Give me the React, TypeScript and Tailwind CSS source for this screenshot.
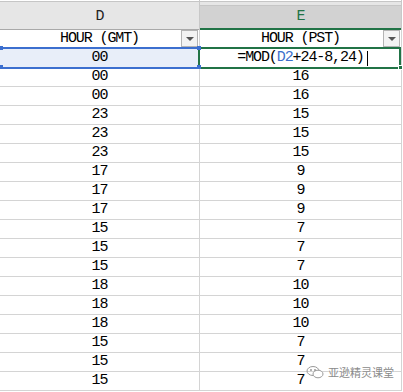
const gmt = ["00", "00", "00", "23", "23", "23", "17", "17", "17", "15", "15", "15", "18", "18", "18", "15", "15", "15"];
const pst = ["=", "16", "16", "15", "15", "15", "9", "9", "9", "7", "7", "7", "10", "10", "10", "7", "7", "7"];

const FilterButton = () => (
  <div className="absolute right-[1px] top-0 flex h-[17px] w-[17px] items-center justify-center border border-[#b4b4b4] bg-[#f3f3f3]">
    <div className="h-0 w-0 border-x-[4px] border-t-[4px] border-x-transparent border-t-[#555]" />
  </div>
);

export default function App() {
  return (
    <div className="relative h-[392px] w-[403px] overflow-hidden bg-white font-['Liberation_Mono',monospace] text-[15px] tracking-[-1.1px] text-black">
      {/* column letters */}
      <div className="flex h-[30px]">
        <div className="flex w-[200px] flex-col border-r border-[#c8c8c8] bg-[#e6e6e6]">
          <div className="h-[1px] bg-white" />
          <div className="h-[1px] bg-[#c6c6c6]" />
          <div className="flex flex-1 items-end justify-center border-b border-[#a9a9a9] pb-[1px] text-[#222]">D</div>
        </div>
        <div className="flex w-[202px] flex-col border-r border-[#c8c8c8] bg-[#e6e6e6]">
          <div className="h-[1px] bg-white" />
          <div className="h-[1px] bg-[#c6c6c6]" />
          <div className="h-[8px] border-b border-[#c6c6c6]" />
          <div className="flex flex-1 items-center justify-center border-b-2 border-[#217346] bg-[#d2d2d2] text-[#217346]">E</div>
        </div>
      </div>

      {/* header row */}
      <div className="flex h-[19px]">
        <div className="relative flex w-[200px] items-center justify-center border-b border-r border-[#d4d4d4]">
          HOUR (GMT)
          <FilterButton />
        </div>
        <div className="relative flex w-[202px] items-center justify-center border-b border-r border-[#d4d4d4]">
          HOUR (PST)
          <FilterButton />
        </div>
      </div>

      {gmt.map((g, i) => (
        <div key={i} className="flex h-[19px]">
          <div
            className={`flex w-[200px] items-center justify-center border-b border-r border-[#d4d4d4] ${
              i === 0 ? "bg-[#e8eef9]" : ""
            }`}
          >
            {g}
          </div>
          <div className="flex w-[202px] items-center justify-center border-b border-r border-[#d4d4d4]">
            {i === 0 ? (
              <span className="flex items-center pl-[4px]">
                =MOD(<span className="text-[#3b6fcc]">D2</span>+24-8,24)
                <span className="ml-[3px] inline-block h-[15px] w-px bg-black" />
              </span>
            ) : (
              pst[i]
            )}
          </div>
        </div>
      ))}

      {/* range highlight on D2 */}
      <div className="absolute left-[-2px] top-[47px] h-[22px] w-[202px] border-2 border-[#3c6fcf]" />
      <div className="absolute left-0 top-[46px] h-[4px] w-[3px] bg-[#3c6fcf]" />
      <div className="absolute left-0 top-[65px] h-[4px] w-[3px] bg-[#3c6fcf]" />

      {/* active cell E2 */}
      <div className="absolute left-[198px] top-[47px] h-[22px] w-[203px] border-2 border-[#217346]" />
      <div className="absolute left-[197px] top-[46px] h-[4px] w-[4px] bg-[#3c6fcf]" />
      <div className="absolute left-[197px] top-[65px] h-[4px] w-[4px] bg-[#3c6fcf]" />
      <div className="absolute left-[398px] top-[65px] h-[5px] w-[5px] border border-white bg-[#217346]" />

      {/* watermark */}
      <div className="absolute left-[306px] top-[364px] flex items-center gap-[4px] text-[11px] tracking-normal font-['Noto_Sans_CJK_SC',sans-serif] text-[#8a8a8a] [text-shadow:0_0_2px_white,0_0_2px_white]">
        <svg width="18" height="14" viewBox="0 0 18 14" fill="none" stroke="#9a9a9a" strokeWidth="1">
          <ellipse cx="7" cy="6" rx="6" ry="4.5" />
          <ellipse cx="12" cy="9" rx="5" ry="3.8" fill="white" />
          <circle cx="5" cy="5" r="0.6" fill="#9a9a9a" />
          <circle cx="9" cy="5" r="0.6" fill="#9a9a9a" />
        </svg>
        <span>亚逊精灵课堂</span>
      </div>
    </div>
  );
}
